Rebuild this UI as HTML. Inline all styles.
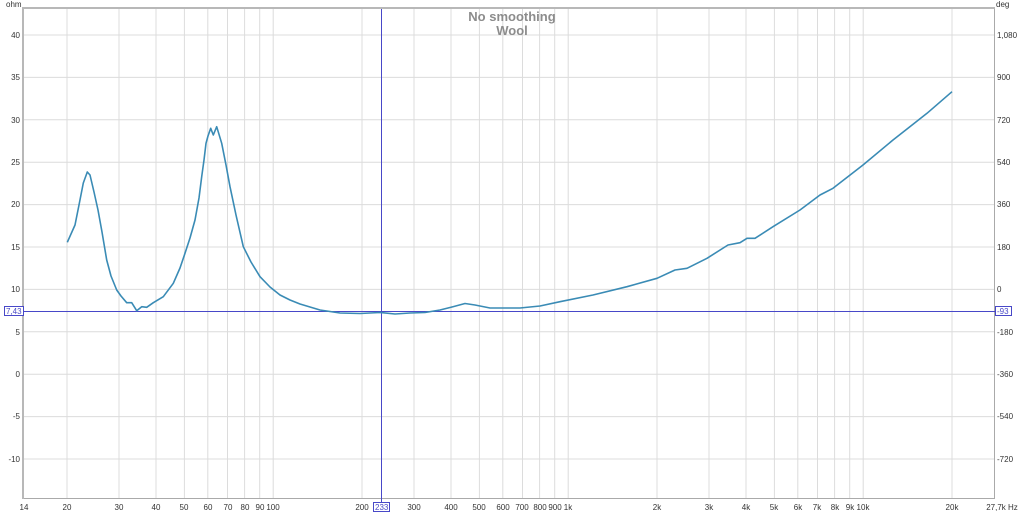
<!DOCTYPE html>
<html><head><meta charset="utf-8"><style>
html,body{margin:0;padding:0;background:#fff;width:1024px;height:512px;overflow:hidden}
svg{display:block}
text{font-family:"Liberation Sans",sans-serif;font-size:8px;fill:#333}
</style></head><body>
<svg width="1024" height="512" viewBox="0 0 1024 512">
<g stroke="#dcdcdc" stroke-width="1">
<line x1="67" y1="9" x2="67" y2="498"/><line x1="119" y1="9" x2="119" y2="498"/><line x1="156" y1="9" x2="156" y2="498"/><line x1="184.4" y1="9" x2="184.4" y2="498"/><line x1="207.8" y1="9" x2="207.8" y2="498"/><line x1="227.5" y1="9" x2="227.5" y2="498"/><line x1="244.6" y1="9" x2="244.6" y2="498"/><line x1="259.7" y1="9" x2="259.7" y2="498"/><line x1="273.2" y1="9" x2="273.2" y2="498"/>
<line x1="362" y1="9" x2="362" y2="498"/><line x1="414" y1="9" x2="414" y2="498"/><line x1="451" y1="9" x2="451" y2="498"/><line x1="479.4" y1="9" x2="479.4" y2="498"/><line x1="502.8" y1="9" x2="502.8" y2="498"/><line x1="522.5" y1="9" x2="522.5" y2="498"/><line x1="539.6" y1="9" x2="539.6" y2="498"/><line x1="554.7" y1="9" x2="554.7" y2="498"/><line x1="568.2" y1="9" x2="568.2" y2="498"/>
<line x1="657" y1="9" x2="657" y2="498"/><line x1="709" y1="9" x2="709" y2="498"/><line x1="746" y1="9" x2="746" y2="498"/><line x1="774.4" y1="9" x2="774.4" y2="498"/><line x1="797.8" y1="9" x2="797.8" y2="498"/><line x1="817.5" y1="9" x2="817.5" y2="498"/><line x1="834.6" y1="9" x2="834.6" y2="498"/><line x1="849.7" y1="9" x2="849.7" y2="498"/><line x1="863.2" y1="9" x2="863.2" y2="498"/><line x1="952" y1="9" x2="952" y2="498"/>
<line x1="24" y1="35" x2="994" y2="35"/><line x1="24" y1="77.4" x2="994" y2="77.4"/><line x1="24" y1="119.8" x2="994" y2="119.8"/><line x1="24" y1="162.2" x2="994" y2="162.2"/><line x1="24" y1="204.6" x2="994" y2="204.6"/><line x1="24" y1="247" x2="994" y2="247"/><line x1="24" y1="289.4" x2="994" y2="289.4"/><line x1="24" y1="331.8" x2="994" y2="331.8"/><line x1="24" y1="374.2" x2="994" y2="374.2"/><line x1="24" y1="416.6" x2="994" y2="416.6"/><line x1="24" y1="459" x2="994" y2="459"/>
</g>
<path d="M23.5 498.5 V8.5 H994.5 V498.5 Z" fill="none" stroke="#aaa" stroke-width="1"/>
<path d="M23 499 V8 H995" fill="none" stroke="#b8b8b8" stroke-width="2"/>
<text x="512" y="21" text-anchor="middle" style="font-size:13px;font-weight:bold;fill:#8c8c8c">No smoothing</text>
<text x="512" y="35" text-anchor="middle" style="font-size:13px;font-weight:bold;fill:#8c8c8c">Wool</text>
<line x1="381.5" y1="9" x2="381.5" y2="503" stroke="#4848c8" stroke-width="1"/>
<line x1="10" y1="311.5" x2="1000" y2="311.5" stroke="#4848c8" stroke-width="1"/>
<polyline fill="none" stroke="#3a8bb5" stroke-width="1.6" stroke-linejoin="round" points="67.3,242.3 75,225 79,205 83.3,183 87.3,172 90,175 94,192 98,210 102,232 106.7,260 111,276 116.7,290 121,296 126.7,302.7 131.7,302.7 136.7,310.7 141.7,306.7 146.7,307.3 153.3,302.7 163.3,296.7 173.3,283.3 180,268 185,253.3 190,238 195,220 199,198 201.7,176.7 204,160 206,143.3 208,136 210.7,128.3 213.3,135 216.7,126.7 221.7,143.3 226,165 230,186.7 236,215 243.3,246.7 251,262 260,276.7 270,287 280,295 290,300 300,304 320,310 340,313 360,313.5 380,312.5 395,314 410,313 425,312.5 440,310 452,307 465,303.5 475,305 490,308 520,308 540,306 560,301.7 593,295 627,286.7 657,278.3 675,270 687,268.3 707,258.3 728,245 740,242.7 747,238.3 755,238.3 773,226.7 800,210 820,195 833,188.3 863,165 893,140 927,113.3 952,91.7"/>
<g text-anchor="end">
<text x="20" y="38">40</text><text x="20" y="80">35</text><text x="20" y="123">30</text><text x="20" y="165">25</text><text x="20" y="207">20</text><text x="20" y="250">15</text><text x="20" y="292">10</text><text x="20" y="335">5</text><text x="20" y="377">0</text><text x="20" y="419">-5</text><text x="20" y="462">-10</text>
</g>
<text x="6" y="7">ohm</text>
<text x="996" y="7">deg</text>
<g>
<text x="997" y="38">1,080</text><text x="997" y="80">900</text><text x="997" y="123">720</text><text x="997" y="165">540</text><text x="997" y="207">360</text><text x="997" y="250">180</text><text x="997" y="292">0</text><text x="997" y="335">-180</text><text x="997" y="377">-360</text><text x="997" y="419">-540</text><text x="997" y="462">-720</text>
</g>
<rect x="4.5" y="306.5" width="19" height="9" fill="#fff" stroke="#4848c8"/>
<text x="6" y="314" style="fill:#4848c8">7,43</text>
<rect x="995.5" y="306.5" width="16" height="9" fill="#fff" stroke="#4848c8"/>
<text x="997" y="314" style="fill:#4848c8">-93</text>
<rect x="373.5" y="502.5" width="16" height="9" fill="#fff" stroke="#4848c8"/>
<text x="375" y="510" style="fill:#4848c8">233</text>
<g text-anchor="middle">
<text x="24" y="510">14</text><text x="67" y="510">20</text><text x="119" y="510">30</text><text x="156" y="510">40</text><text x="184" y="510">50</text><text x="208" y="510">60</text><text x="228" y="510">70</text><text x="245" y="510">80</text><text x="260" y="510">90</text><text x="273" y="510">100</text><text x="362" y="510">200</text><text x="414" y="510">300</text><text x="451" y="510">400</text><text x="479" y="510">500</text><text x="503" y="510">600</text><text x="522" y="510">700</text><text x="540" y="510">800</text><text x="555" y="510">900</text><text x="568" y="510">1k</text><text x="657" y="510">2k</text><text x="709" y="510">3k</text><text x="746" y="510">4k</text><text x="774" y="510">5k</text><text x="798" y="510">6k</text><text x="817" y="510">7k</text><text x="835" y="510">8k</text><text x="850" y="510">9k</text><text x="863" y="510">10k</text><text x="952" y="510">20k</text><text x="1002" y="510">27,7k Hz</text>
</g>
</svg>
</body></html>
